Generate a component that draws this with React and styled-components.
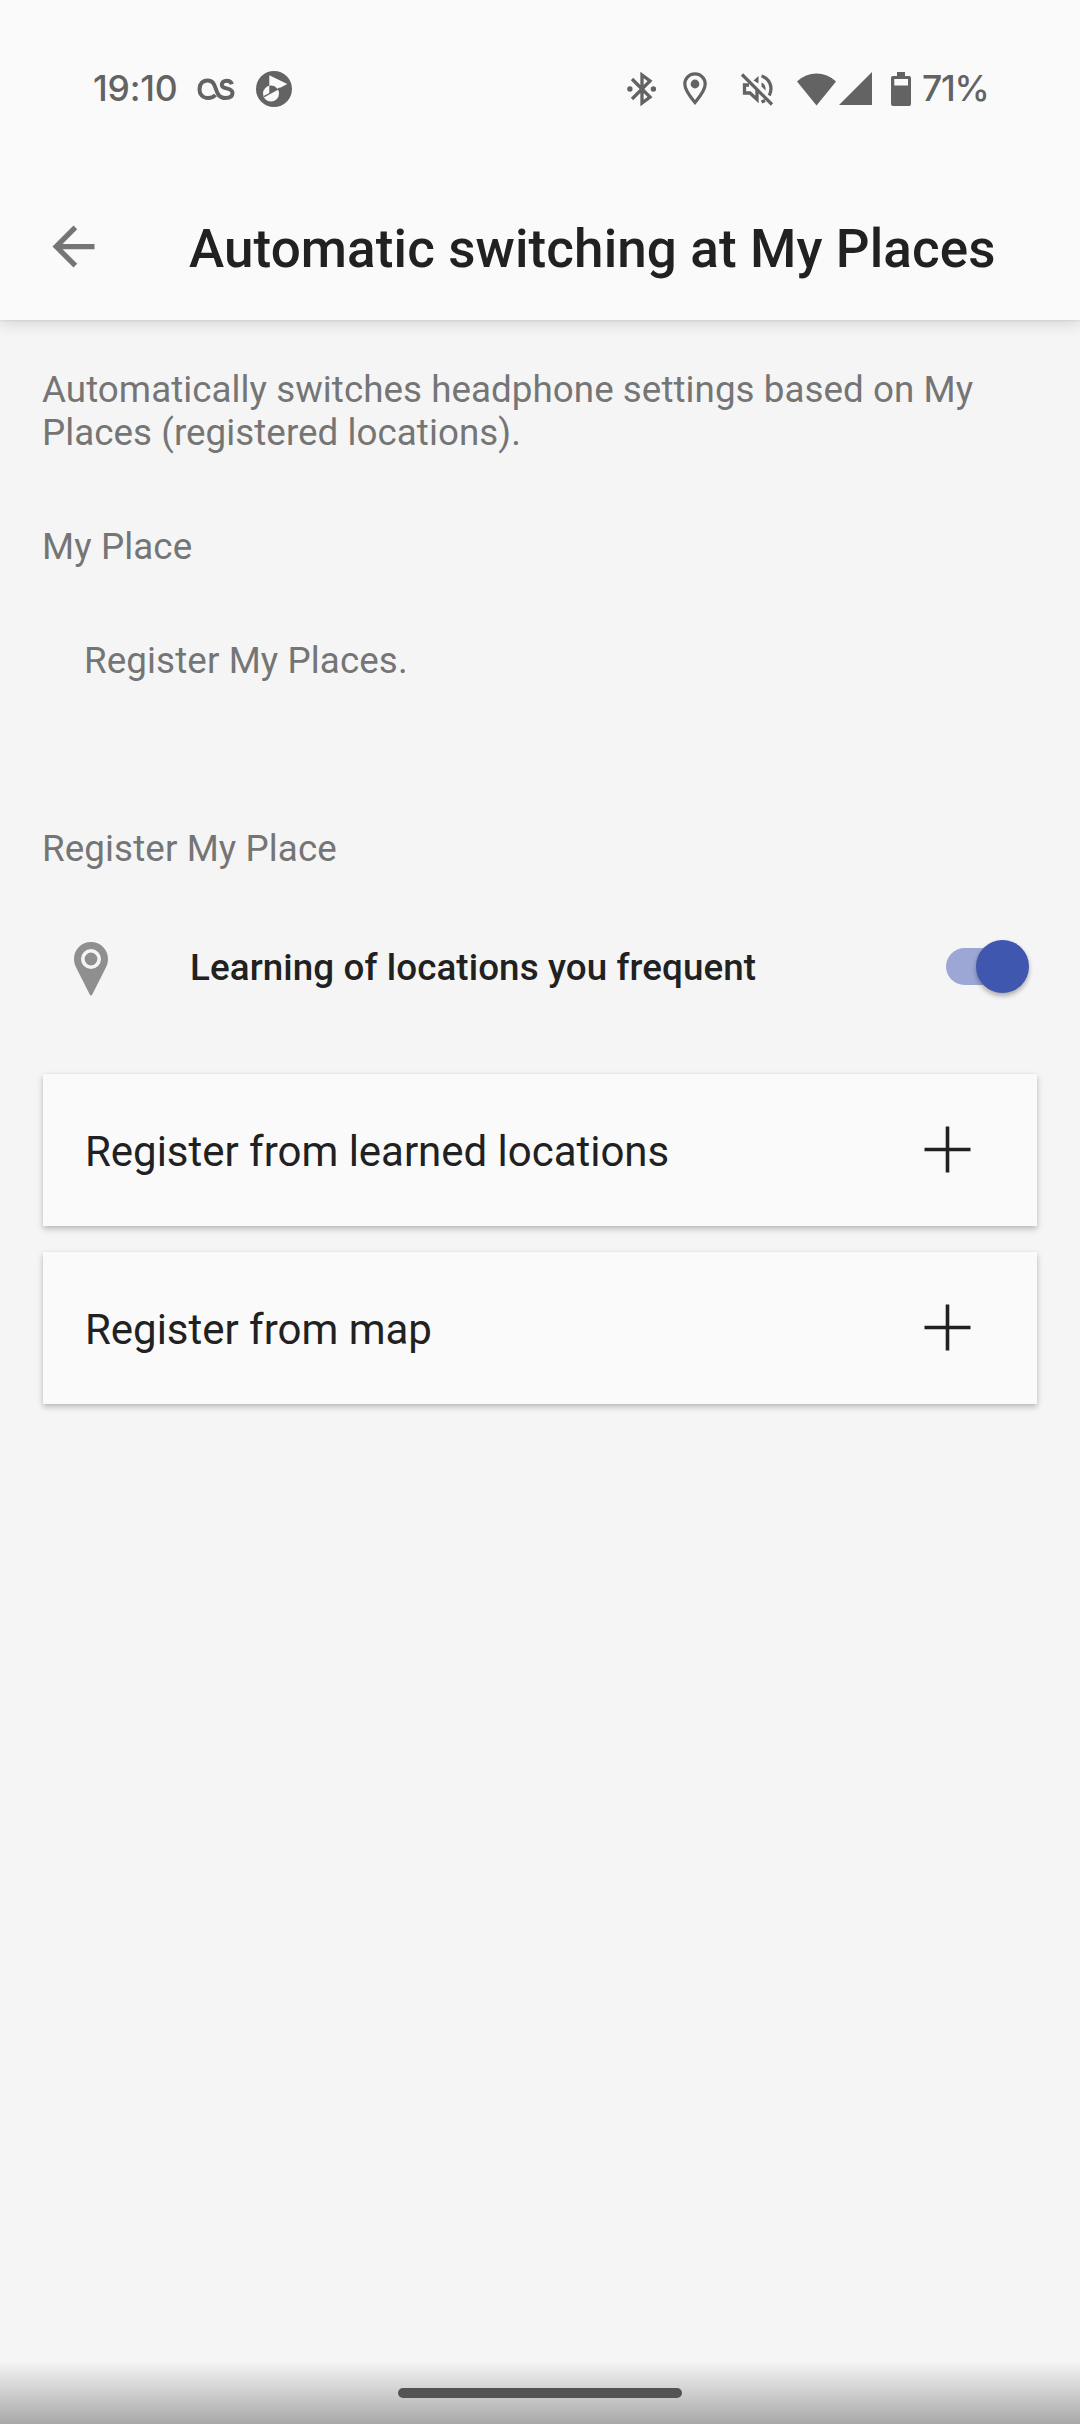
import styled, { createGlobalStyle } from "styled-components";
import { useState } from "react";

const GlobalStyle = createGlobalStyle`
  * {
    box-sizing: border-box;
  }
  body {
    margin: 0;
    background: #f5f5f5;
    font-family: Roboto, sans-serif;
  }
`;

const Screen = styled.div`
  width: 1080px;
  height: 2424px;
  display: flex;
  flex-direction: column;
  background: #f5f5f5;
  overflow: hidden;
`;

const Header = styled.header`
  height: 320px;
  flex-shrink: 0;
  background: #fafafa;
  box-shadow: 0 4px 14px rgba(0, 0, 0, 0.13), 0 1px 2px rgba(0, 0, 0, 0.07);
`;

const StatusBar = styled.div`
  height: 178px;
  padding: 0 92px 0 93px;
  display: flex;
  justify-content: space-between;
  color: #636363;
`;

const StatusGroup = styled.div`
  display: flex;
  align-items: center;
  height: 177px;
`;

const StatusText = styled.span`
  font-family: Inter, sans-serif;
  font-size: 35.5px;
  font-weight: 450;
  line-height: 40px;
  letter-spacing: ${(props) => props.$spacing}px;
  white-space: nowrap;
`;

const Clock = styled(StatusText)`
  width: 84px;
`;

const BatteryLevel = styled(StatusText)`
  width: 66px;
  margin-left: 11px;
`;

const StatusIcon = styled.svg`
  display: block;
  flex-shrink: 0;
  margin-left: ${(props) => props.$gap || 0}px;
`;

const Toolbar = styled.div`
  height: 142px;
  padding-left: 42px;
  display: flex;
  align-items: center;
`;

const BackButton = styled.button`
  width: 63px;
  height: 63px;
  padding: 0;
  border: none;
  background: none;
  color: #757575;
  margin: 0 84px 6px 0;
`;

const Title = styled.h1`
  margin: 0;
  font-size: 53px;
  font-weight: 500;
  line-height: 62px;
  letter-spacing: 0.1px;
  color: #212121;
  white-space: nowrap;
`;

const Content = styled.main`
  flex: 1;
  padding: 48px 43px 0 42px;
  color: #757575;
  font-size: 36.75px;
  line-height: 43px;
  letter-spacing: 0.1px;
`;

const Description = styled.p`
  margin: 0 0 71px;
  letter-spacing: 0.05px;
`;

const SectionTitle = styled.h2`
  margin: 0;
  font-size: inherit;
  font-weight: 400;
`;

const EmptyText = styled.p`
  margin: 71px 0 145px;
  padding-left: 42px;
`;

const SettingRow = styled.div`
  display: flex;
  align-items: center;
  height: 106px;
  margin: 44px 0 54px;
  padding: 0 8px 0 32px;
`;

const PinIcon = styled.svg`
  margin-top: 3px;
`;

const SettingLabel = styled.span`
  flex: 1;
  padding: 1px 0 0 82px;
  font-weight: 500;
  color: #212121;
`;

const Switch = styled.button`
  width: 83px;
  height: 53px;
  margin-bottom: 1px;
  padding: 0;
  border: none;
  background: none;
  display: flex;
  align-items: center;
`;

const Track = styled.span`
  width: 76px;
  height: 37px;
  display: flex;
  align-items: center;
  justify-content: ${(props) => (props.$on ? "flex-end" : "flex-start")};
  border-radius: 19px;
  background: ${(props) => (props.$on ? "#9ca7d5" : "#b2b2b2")};
`;

const Thumb = styled.span`
  width: 53px;
  height: 53px;
  flex-shrink: 0;
  margin-right: -7px;
  border-radius: 50%;
  background: ${(props) => (props.$on ? "#3f57ae" : "#fafafa")};
  box-shadow: 0 3px 5px rgba(0, 0, 0, 0.3);
`;

const Card = styled.div`
  height: 152px;
  margin: 0 0 26px 1px;
  padding: 0 65px 0 42px;
  display: flex;
  align-items: center;
  justify-content: space-between;
  background: #fafafa;
  color: #212121;
  box-shadow: 0 3px 6px rgba(0, 0, 0, 0.24), 0 0 2px rgba(0, 0, 0, 0.06);
`;

const CardLabel = styled.span`
  padding-top: 3px;
  font-size: 42px;
  line-height: 50px;
  letter-spacing: -0.02px;
`;

const NavigationBar = styled.footer`
  height: 63px;
  display: flex;
  justify-content: center;
  padding-top: 27px;
  background: linear-gradient(#f5f5f5, #a8a8a8);
`;

const HomeHandle = styled.div`
  width: 284px;
  height: 10px;
  border-radius: 5px;
  background: #535353;
`;

const options = ["Register from learned locations", "Register from map"];

const LastFmIcon = () => (
  <StatusIcon $gap={20} width="38" height="22" viewBox="0 0 38 22">
    <path
      d="M18.5 17 C16.5 19.2 14 20 11 20 C5.5 20 2.5 16.3 2.5 11.2 C2.5 6 5.5 2.6 10.5 2.6 C16 2.6 17.3 6 18.9 11 C20.6 16.5 22.5 20 28.5 20 C33 20 35.5 18 35.5 15 C35.5 12 33.2 11.2 29.5 10.4 C26.2 9.7 24.8 9 24.8 6.8 C24.8 4.3 26.8 2.8 29.6 2.8 C32.3 2.8 34.2 4 34.8 6.3"
      fill="none"
      stroke="currentColor"
      strokeWidth="4"
    />
  </StatusIcon>
);

const PlayerIcon = () => (
  <StatusIcon $gap={21} width="36" height="36" viewBox="0 0 36 36">
    <circle cx="18" cy="18" r="18" fill="currentColor" />
    <path
      fillRule="evenodd"
      d="M13.3 4.3 L31.3 13 L13.3 22.6Z M15 14.6 A8 8 0 1 0 15 30.6 A8 8 0 1 0 15 14.6Z"
      fill="#fafafa"
    />
    <path d="M8 25.6 L24 17" stroke="currentColor" strokeWidth="1.2" />
  </StatusIcon>
);

const BluetoothIcon = () => (
  <StatusIcon width="30" height="34" viewBox="0 0 30 34">
    <path
      d="M5 7 L23 25 L15 31 V3 L23 9 L5 27"
      fill="none"
      stroke="currentColor"
      strokeWidth="3.3"
    />
    <circle cx="2.9" cy="17" r="2.7" fill="currentColor" />
    <circle cx="26.4" cy="17" r="2.7" fill="currentColor" />
  </StatusIcon>
);

const LocationIcon = () => (
  <StatusIcon $gap={26} width="24" height="34" viewBox="0 0 24 34">
    <path
      d="M12 1.8 C6.2 1.8 1.8 6.3 1.8 12 C1.8 18.5 7.5 25 12 30.5 C16.5 25 22.2 18.5 22.2 12 C22.2 6.3 17.8 1.8 12 1.8Z"
      fill="none"
      stroke="currentColor"
      strokeWidth="3.2"
    />
    <circle cx="12" cy="12" r="4.4" fill="currentColor" />
  </StatusIcon>
);

const MutedIcon = () => (
  <StatusIcon $gap={33} width="34" height="34" viewBox="0 0 34 34">
    <path d="M2 2.5 L32 32.5" stroke="currentColor" strokeWidth="3.3" />
    <path
      d="M9 13 H4.5 V21 H10 L17 27.5 V18"
      fill="none"
      stroke="currentColor"
      strokeWidth="3.3"
    />
    <path d="M18.5 4 V11.5 L13.5 8.5Z" fill="currentColor" />
    <path d="M21.5 10.5 C24.5 12 26 14.5 25.5 18.5 L21.5 14.5Z" fill="currentColor" />
    <path
      d="M21.5 4 C29 6.2 33.5 14.5 29.3 23.5 M21.5 30 L25 28.5"
      fill="none"
      stroke="currentColor"
      strokeWidth="3.3"
    />
  </StatusIcon>
);

const WifiIcon = () => (
  <StatusIcon $gap={23} width="39" height="34" viewBox="0 0 39 34">
    <path d="M19.5 33.5 L0 9.5 C11 -1.3 28 -1.3 39 9.5Z" fill="currentColor" />
  </StatusIcon>
);

const SignalIcon = () => (
  <StatusIcon $gap={3} width="33" height="33" viewBox="0 0 33 33">
    <path d="M0 33 L33 0 V33Z" fill="currentColor" />
  </StatusIcon>
);

const BatteryIcon = () => (
  <StatusIcon $gap={19} width="20" height="34" viewBox="0 0 20 34">
    <path
      fillRule="evenodd"
      d="M6 0 H14 V4 H18 Q20 4 20 6 V32 Q20 34 18 34 H2 Q0 34 0 32 V6 Q0 4 2 4 H6Z M3.3 7 V13.5 H17 V7Z"
      fill="currentColor"
    />
  </StatusIcon>
);

const App = () => {
  const [learning, setLearning] = useState(true);

  return (
    <Screen>
      <GlobalStyle />
      <Header>
        <StatusBar>
          <StatusGroup>
            <Clock $spacing={-0.2}>19:10</Clock>
            <LastFmIcon />
            <PlayerIcon />
          </StatusGroup>
          <StatusGroup>
            <BluetoothIcon />
            <LocationIcon />
            <MutedIcon />
            <WifiIcon />
            <SignalIcon />
            <BatteryIcon />
            <BatteryLevel $spacing={-1.3}>71%</BatteryLevel>
          </StatusGroup>
        </StatusBar>
        <Toolbar>
          <BackButton aria-label="Back">
            <svg width="63" height="63" viewBox="0 0 24 24" fill="currentColor">
              <path d="M20 11H7.83l5.59-5.59L12 4l-8 8 8 8 1.41-1.41L7.83 13H20v-2z" />
            </svg>
          </BackButton>
          <Title>Automatic switching at My Places</Title>
        </Toolbar>
      </Header>

      <Content>
        <Description>
          Automatically switches headphone settings based on My Places (registered locations).
        </Description>
        <SectionTitle>My Place</SectionTitle>
        <EmptyText>Register My Places.</EmptyText>

        <SectionTitle>Register My Place</SectionTitle>
        <SettingRow>
          <PinIcon width="34" height="54" viewBox="0 0 34 54">
            <path
              d="M17 0 C7.5 0 0 7.4 0 17 C0 21 1.3 24 3 27.3 L15.5 52 Q17 55 18.5 52 L31 27.3 C32.7 24 34 21 34 17 C34 7.4 26.5 0 17 0Z"
              fill="#8f8f8f"
            />
            <circle cx="17" cy="17" r="8.2" fill="none" stroke="#f5f5f5" strokeWidth="3.6" />
          </PinIcon>
          <SettingLabel>Learning of locations you frequent</SettingLabel>
          <Switch role="switch" aria-checked={learning} onClick={() => setLearning(!learning)}>
            <Track $on={learning}>
              <Thumb $on={learning} />
            </Track>
          </Switch>
        </SettingRow>

        {options.map((option) => (
          <Card key={option}>
            <CardLabel>{option}</CardLabel>
            <svg width="50" height="50" viewBox="0 0 50 50">
              <path d="M25.5 1.5 V47.5 M2.5 24.5 H48.5" stroke="#212121" strokeWidth="3.6" />
            </svg>
          </Card>
        ))}
      </Content>

      <NavigationBar>
        <HomeHandle />
      </NavigationBar>
    </Screen>
  );
};

export default App;
